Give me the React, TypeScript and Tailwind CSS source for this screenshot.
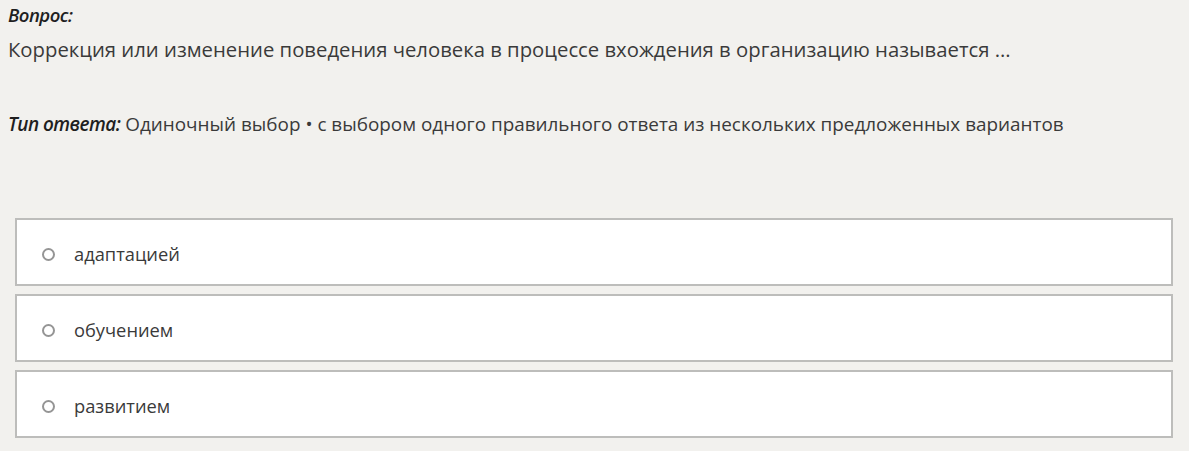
import React from 'react';

const options = ['адаптацией', 'обучением', 'развитием'];

export default function App() {
  return (
    <div
      className="min-h-[451px] bg-[#f2f1ee] text-[#3a3a3a] pl-[8px] pr-[16px] pt-[4px]"
      style={{ fontFamily: '"Open Sans", "Noto Sans", sans-serif' }}
    >
      <div className="text-[18.5px] font-semibold italic text-[#1f1f1f] leading-[22px] tracking-[-0.5px]">Вопрос:</div>
      <div className="text-[20.3px] leading-[28px] mt-[9px]">
        Коррекция или изменение поведения человека в процессе вхождения в организацию называется ...
      </div>

      <div className="mt-[47px] text-[18.9px] leading-[28px] whitespace-nowrap">
        <span className="font-semibold italic text-[#1f1f1f] tracking-[-0.5px]">Тип ответа:</span> Одиночный выбор • с выбором одного правильного ответа из нескольких предложенных вариантов
      </div>

      <div className="mt-[80px] ml-[7px] flex flex-col gap-[8px]">
        {options.map((o) => (
          <label
            key={o}
            className="h-[68px] bg-white border-2 border-[#bdbdbb] flex items-center pl-[25px] pt-[4px]"
          >
            <span className="w-[13px] h-[13px] rounded-full border-2 border-[#959595] shrink-0" />
            <span className="ml-[19px] text-[18.3px]">{o}</span>
          </label>
        ))}
      </div>
    </div>
  );
}
